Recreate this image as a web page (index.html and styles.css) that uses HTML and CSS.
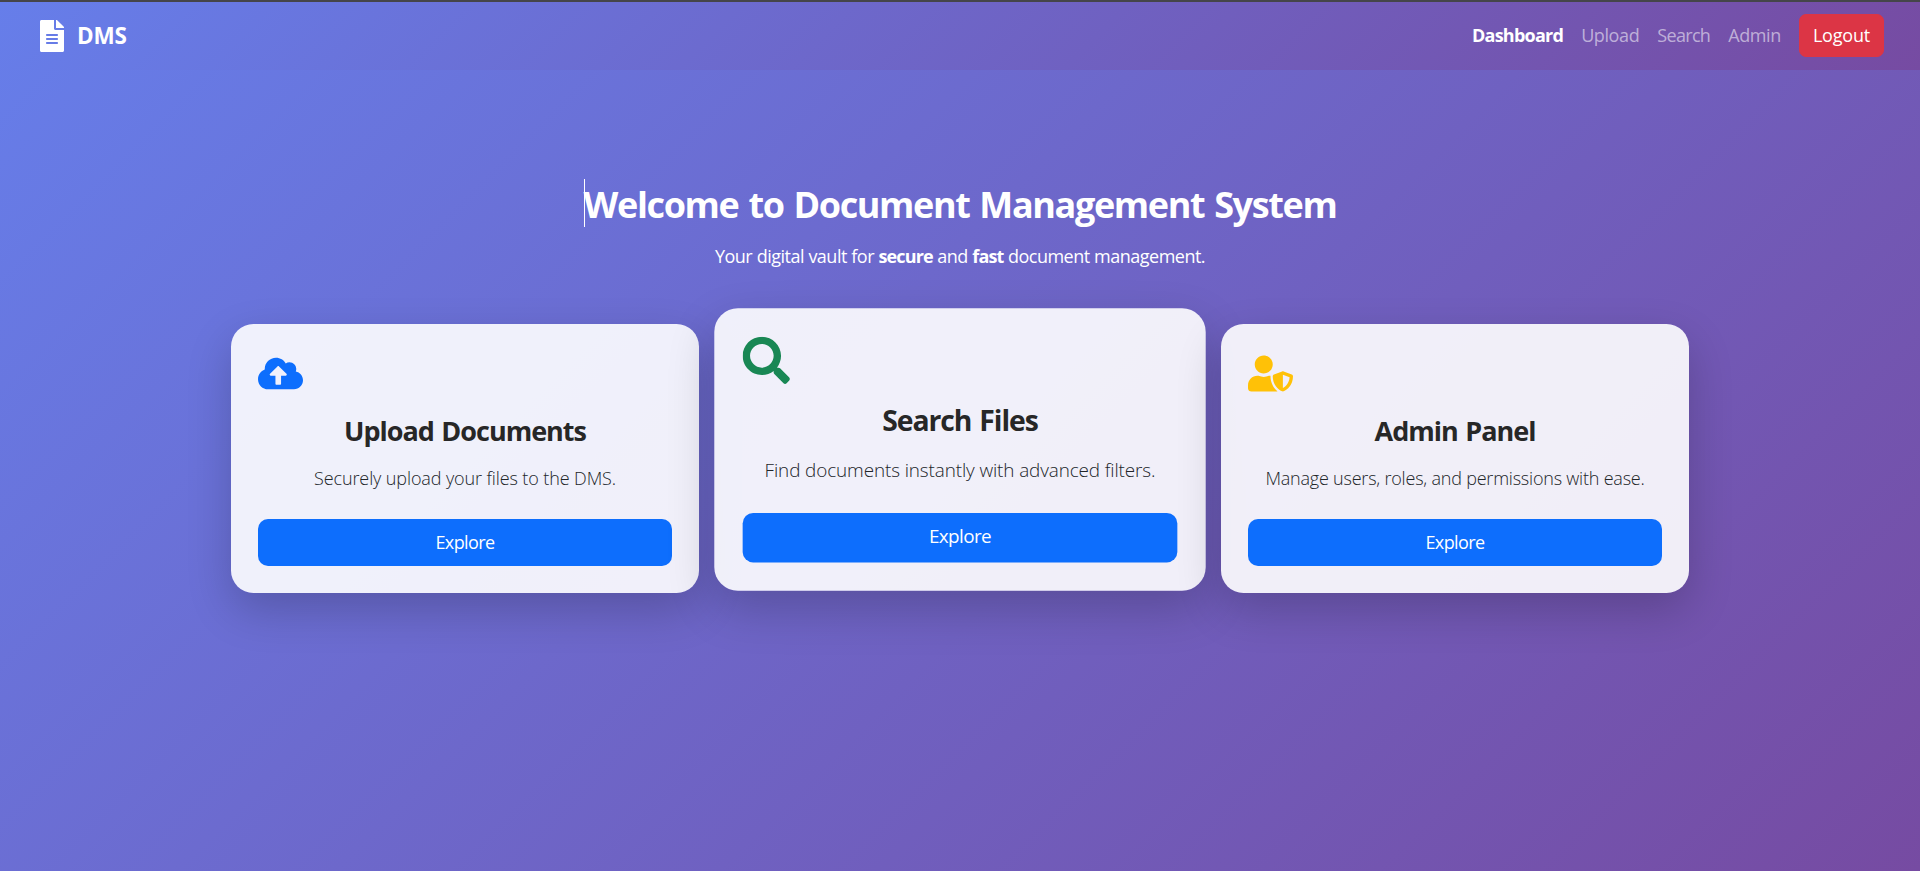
FILE: index.html
```
<!DOCTYPE html>
<html lang="en">
<head>
<meta charset="utf-8">
<title>DMS - Dashboard</title>
<link rel="stylesheet" href="styles.css">
</head>
<body>
<header class="navbar">
  <a class="brand">
    <svg class="brand-icon" viewBox="0 0 384 512"><path d="M224 136V0H24C10.700 0 0 10.700 0 24v464c0 13.300 10.700 24 24 24h336c13.300 0 24-10.700 24-24V160H248c-13.200 0-24-10.800-24-24zm64 236c0 6.600-5.400 12-12 12H108c-6.600 0-12-5.400-12-12v-8c0-6.600 5.400-12 12-12h168c6.600 0 12 5.400 12 12v8zm0-64c0 6.600-5.400 12-12 12H108c-6.600 0-12-5.400-12-12v-8c0-6.600 5.400-12 12-12h168c6.600 0 12 5.400 12 12v8zm0-72v8c0 6.600-5.400 12-12 12H108c-6.600 0-12-5.400-12-12v-8c0-6.600 5.400-12 12-12h168c6.600 0 12 5.400 12 12zm96-114.100v6.100H256V0h6.100c6.400 0 12.500 2.500 17 7l97.900 98c4.500 4.500 7 10.600 7 16.900z"/></svg>
    <span class="brand-name">DMS</span>
  </a>
  <nav class="nav">
    <a class="nav-link active">Dashboard</a>
    <a class="nav-link">Upload</a>
    <a class="nav-link search">Search</a>
    <a class="nav-link">Admin</a>
    <a class="logout">Logout</a>
  </nav>
</header>
<main class="main">
  <h1 class="title"><span class="caret"></span>Welcome to Document Management System</h1>
  <p class="lead">Your digital vault for <strong>secure</strong> and <strong>fast</strong> document management.</p>
  <section class="cards">
    <article class="card">
      <svg class="card-icon blue" viewBox="0 0 640 512"><path d="M537.600 226.600c4.100-10.700 6.400-22.400 6.400-34.600 0-53-43-96-96-96-19.700 0-38.100 6-53.300 16.200C367 64.200 315.300 32 256 32c-88.400 0-160 71.600-160 160 0 2.700.1 5.400.2 8.100C40.200 219.800 0 273.200 0 336c0 79.500 64.500 144 144 144h368c70.700 0 128-57.300 128-128 0-61.900-44-113.600-102.400-125.400zM393.400 288H328v112c0 8.800-7.200 16-16 16h-48c-8.800 0-16-7.200-16-16V288h-65.400c-14.300 0-21.400-17.200-11.300-27.300l105.400-105.400c6.200-6.200 16.400-6.200 22.600 0l105.400 105.400c10.100 10.100 2.900 27.300-11.300 27.300z"/></svg>
      <h2 class="card-title">Upload Documents</h2>
      <p class="card-text">Securely upload your files to the DMS.</p>
      <a class="explore">Explore</a>
    </article>
    <article class="card raised">
      <svg class="card-icon green" viewBox="0 0 512 512"><path d="M505 442.700L405.300 343c-4.500-4.500-10.600-7-17-7H372c27.600-35.300 44-79.700 44-128C416 93.100 322.900 0 208 0S0 93.100 0 208s93.100 208 208 208c48.300 0 92.700-16.400 128-44v16.300c0 6.400 2.500 12.500 7 17l99.700 99.700c9.400 9.400 24.600 9.400 33.900 0l28.300-28.300c9.400-9.400 9.400-24.600.1-34zM208 336c-70.700 0-128-57.200-128-128 0-70.700 57.200-128 128-128 70.700 0 128 57.200 128 128 0 70.700-57.200 128-128 128z"/></svg>
      <h2 class="card-title">Search Files</h2>
      <p class="card-text">Find documents instantly with advanced filters.</p>
      <a class="explore">Explore</a>
    </article>
    <article class="card">
      <svg class="card-icon amber" viewBox="0 0 640 512"><path d="M622.300 271.100l-115.200-45c-4.100-1.600-12.600-3.700-22.200 0l-115.200 45c-10.700 4.200-17.700 14-17.700 24.900 0 111.600 68.700 188.800 132.900 213.900 9.600 3.700 18 1.600 22.200 0C558.400 489.900 640 420.500 640 296c0-10.900-7-20.700-17.700-24.900zM496 462.400V273.300l95.500 37.300c-5.600 87.100-60.900 135.400-95.500 151.800zM224 256c70.700 0 128-57.300 128-128S294.700 0 224 0 96 57.300 96 128s57.300 128 128 128zm96 40c0-2.500.8-4.800 1.100-7.200-2.500-.1-4.900-.8-7.500-.8h-16.700c-22.200 10.200-46.900 16-72.900 16s-50.600-5.800-72.900-16h-16.700C60.200 288 0 348.200 0 422.400V464c0 26.500 21.500 48 48 48h352c6.800 0 13.300-1.500 19.200-4-54-42.900-99.200-116.700-99.200-212z"/></svg>
      <h2 class="card-title">Admin Panel</h2>
      <p class="card-text wide">Manage users, roles, and permissions with ease.</p>
      <a class="explore">Explore</a>
    </article>
  </section>
</main>
</body>
</html>
```
FILE: styles.css
```
* { box-sizing: border-box; }

body {
  margin: 0;
  min-height: 871px;
  border-top: 2px solid #45454a;
  background: linear-gradient(135deg, #667eea, #764ba2) border-box;
  font: 400 18px/27px "Open Sans", "Noto Sans", sans-serif;
  color: #fff;
  overflow: hidden;
}

.navbar {
  display: flex;
  align-items: center;
  justify-content: space-between;
  height: 68px;
  padding: 0 36px 2px 40px;
  background: linear-gradient(135deg, #667eea, #764ba2);
}

.brand { display: flex; align-items: center; gap: 13px; padding-top: 1px; }
.brand-icon { width: 24px; height: 32px; fill: #fff; }
.brand-name { font-size: 22.5px; font-weight: 700; letter-spacing: -0.2px; }

.nav { display: flex; align-items: center; gap: 18px; letter-spacing: -0.4px; }
.nav-link { color: rgba(255, 255, 255, 0.55); }
.nav-link.search { letter-spacing: -0.67px; }
.nav-link.active { color: #fff; font-weight: 700; letter-spacing: -0.75px; }

.logout {
  padding: 7px 13px;
  border: 1px solid #dc3545;
  border-radius: 7px;
  background: #dc3545;
  line-height: 27px;
  letter-spacing: -0.2px;
}

.main { padding-top: 108px; text-align: center; }

.title {
  position: relative;
  width: fit-content;
  margin: 0 auto;
  padding-top: 2px;
  font-size: 36px;
  font-weight: 700;
  line-height: 50px;
  letter-spacing: -1.37px;
  word-spacing: 1.9px;
}

.caret {
  position: absolute;
  left: 0;
  top: 1px;
  width: 1px;
  height: 48px;
  background: #fff;
}

.lead { margin: 13px 0 0; letter-spacing: -0.51px; word-spacing: 0.3px; }
.lead strong { font-weight: 700; letter-spacing: -0.85px; }

.cards {
  display: grid;
  grid-template-columns: repeat(3, 468px);
  justify-content: center;
  gap: 27px;
  margin-top: 54px;
}

.card {
  display: flex;
  flex-direction: column;
  position: relative;
  height: 269px;
  padding: 27px;
  border-radius: 22.5px;
  background: rgba(255, 255, 255, 0.9);
  box-shadow: 0 17px 45px rgba(0, 0, 0, 0.2);
  color: #212529;
}

.card.raised { transform: translateY(-9px) scale(1.05); }

.card-icon { width: 45px; height: 45px; }
.blue { fill: #0d6efd; }
.green { fill: #198754; }
.amber { fill: #ffc107; }

.card-title {
  margin: 18px 0 0;
  font-size: 27px;
  font-weight: 700;
  line-height: 34px;
  letter-spacing: -1px;
  word-spacing: 1.5px;
  color: #272727;
}

.card-text { margin: 17px 0 0; font-weight: 300; letter-spacing: -0.11px; }
.card-text.wide { letter-spacing: -0.21px; }

.explore {
  margin-top: auto;
  padding: 10px 0;
  border-radius: 10px;
  background: #0d6efd;
  line-height: 27px;
  letter-spacing: -0.6px;
  color: #fff;
}

.raised .explore { padding: 9px 0 11px; }
```
